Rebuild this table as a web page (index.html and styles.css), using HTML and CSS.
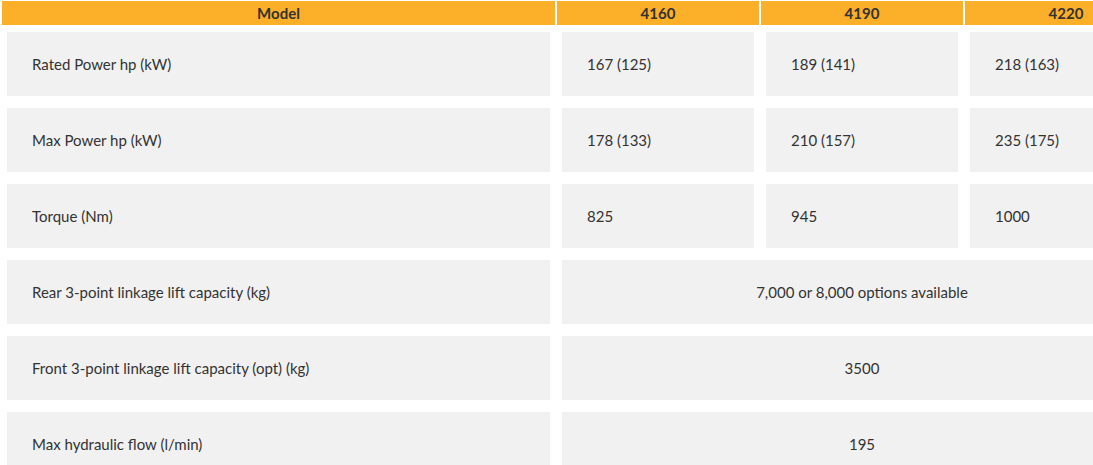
FILE: index.html
```html
<!DOCTYPE html>
<html>
<head>
<meta charset="utf-8">
<link rel="stylesheet" href="styles.css">
</head>
<body>
<div class="wrap">
<table class="specs">
  <thead>
    <tr>
      <th class="col-label">Model</th>
      <th class="col-val">4160</th>
      <th class="col-val">4190</th>
      <th class="col-val">4220</th>
    </tr>
  </thead>
  <tbody>
    <tr>
      <td><div class="cell">Rated Power hp (kW)</div></td>
      <td><div class="cell">167 (125)</div></td>
      <td><div class="cell">189 (141)</div></td>
      <td><div class="cell">218 (163)</div></td>
    </tr>
    <tr>
      <td><div class="cell">Max Power hp (kW)</div></td>
      <td><div class="cell">178 (133)</div></td>
      <td><div class="cell">210 (157)</div></td>
      <td><div class="cell">235 (175)</div></td>
    </tr>
    <tr>
      <td><div class="cell">Torque (Nm)</div></td>
      <td><div class="cell">825</div></td>
      <td><div class="cell">945</div></td>
      <td><div class="cell">1000</div></td>
    </tr>
    <tr>
      <td><div class="cell">Rear 3-point linkage lift capacity (kg)</div></td>
      <td colspan="3"><div class="cell center">7,000 or 8,000 options available</div></td>
    </tr>
    <tr>
      <td><div class="cell">Front 3-point linkage lift capacity (opt) (kg)</div></td>
      <td colspan="3"><div class="cell center">3500</div></td>
    </tr>
    <tr>
      <td><div class="cell">Max hydraulic flow (l/min)</div></td>
      <td colspan="3"><div class="cell center">195</div></td>
    </tr>
  </tbody>
</table>
</div>
</body>
</html>
```

FILE: styles.css
```css
html, body {
  margin: 0;
  padding: 0;
  background: #ffffff;
}
body {
  font-family: "Lato", "Open Sans", sans-serif;
  color: #333333;
  overflow: hidden;
}
.wrap {
  width: 1093px;
  height: 465px;
  overflow: hidden;
}
.specs {
  border-collapse: separate;
  border-spacing: 2px;
  margin-top: -1px;
  table-layout: fixed;
  width: 1169px;
}
.specs th {
  background: #fcaf28;
  height: 24px;
  padding: 0;
  font-size: 15px;
  font-weight: 700;
  color: #333333;
  text-align: center;
  vertical-align: middle;
}
.col-label { width: 553px; }
.col-val { width: 202px; }
.specs td {
  padding: 5px;
}
.cell {
  background: #f1f1f1;
  height: 64px;
  display: flex;
  align-items: center;
  padding-left: 25px;
  font-size: 15px;
  box-sizing: border-box;
}
.cell.center {
  justify-content: center;
  padding-left: 0;
}
```
